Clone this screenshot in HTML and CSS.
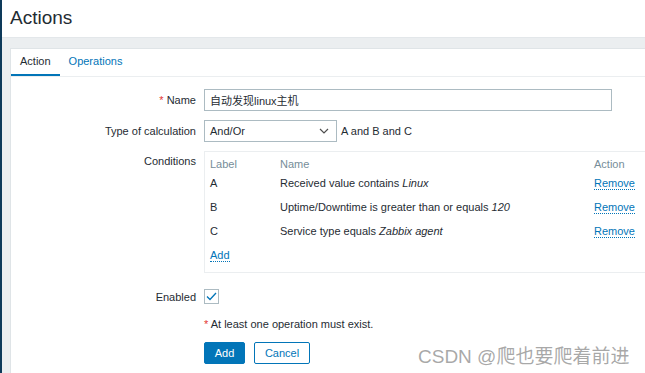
FILE: index.html
```html
<!DOCTYPE html>
<html lang="en">
<head>
    <meta charset="UTF-8">
    <title>Actions</title>
    <link rel="stylesheet" href="styles.css">
</head>
<body>
    <div class="side-edge"></div>
    <main class="wrapper">
        <header class="page-header">
            <h1>Actions</h1>
        </header>
        <div class="panel">
            <ul class="tabs">
                <li class="active"><a href="#">Action</a></li>
                <li><a href="#">Operations</a></li>
            </ul>
            <form class="action-form">
                <div class="form-row">
                    <label class="form-label"><span class="req">*</span> Name</label>
                    <input class="text-input" type="text" value="自动发现linux主机">
                </div>
                <div class="form-row">
                    <label class="form-label">Type of calculation</label>
                    <div class="select-box">
                        <span>And/Or</span>
                        <svg width="10" height="6" viewBox="0 0 10 6"><polyline points="1,1 5,5 9,1" fill="none" stroke="#4f4f4f" stroke-width="1.2"/></svg>
                    </div>
                    <span class="calc-text">A and B and C</span>
                </div>
                <div class="form-row top">
                    <label class="form-label cond-label">Conditions</label>
                    <div class="cond-box">
                        <table class="cond-table">
                            <thead>
                                <tr><th class="col-label">Label</th><th class="col-name">Name</th><th>Action</th></tr>
                            </thead>
                            <tbody>
                                <tr><td>A</td><td>Received value contains <em>Linux</em></td><td><a class="link" href="#">Remove</a></td></tr>
                                <tr><td>B</td><td>Uptime/Downtime is greater than or equals <em>120</em></td><td><a class="link" href="#">Remove</a></td></tr>
                                <tr><td>C</td><td>Service type equals <em>Zabbix agent</em></td><td><a class="link" href="#">Remove</a></td></tr>
                                <tr><td colspan="3"><a class="link" href="#">Add</a></td></tr>
                            </tbody>
                        </table>
                    </div>
                </div>
                <div class="form-row enabled-row">
                    <label class="form-label">Enabled</label>
                    <span class="checkbox">
                        <svg width="11" height="9" viewBox="0 0 11 9"><polyline points="1,4.5 4,7.5 10,1" fill="none" stroke="#0275b8" stroke-width="1.3"/></svg>
                    </span>
                </div>
                <div class="form-row error-row">
                    <span class="form-label"></span>
                    <span class="error"><span class="req">*</span> At least one operation must exist.</span>
                </div>
                <div class="form-row buttons">
                    <span class="form-label"></span>
                    <button class="btn btn-primary" type="button">Add</button>
                    <button class="btn btn-alt" type="button">Cancel</button>
                </div>
            </form>
        </div>
    </main>
    <div class="watermark">CSDN @爬也要爬着前进</div>
</body>
</html>
```
FILE: styles.css
```css
* {
    margin: 0;
    padding: 0;
    box-sizing: border-box;
}

body {
    font-family: "Liberation Sans", Arial, "Noto Sans CJK SC", sans-serif;
    font-size: 11px;
    color: #1f2c33;
    display: flex;
    min-height: 100vh;
    overflow: hidden;
    background: #ebeef0;
}

.side-edge {
    width: 2px;
    background: #0e3a5a;
    flex-shrink: 0;
}

.wrapper {
    flex: 1;
    background: #ebeef0;
}

.page-header {
    background: #fff;
    height: 38px;
    padding: 6px 8px 0;
    border-bottom: 1px solid #e3e7ea;
}

.page-header h1 {
    font-size: 19px;
    font-weight: normal;
    line-height: 24px;
}

.panel {
    background: #fff;
    border: 1px solid #dfe4e7;
    margin: 10px -10px 0 8px;
    height: 340px;
}

.tabs {
    list-style: none;
    display: flex;
    border-bottom: 1px solid #ebeef0;
}

.tabs li a {
    display: block;
    height: 27px;
    line-height: 25px;
    padding: 0 9px;
    color: #0275b8;
    text-decoration: none;
    border-bottom: 2px solid transparent;
}

.tabs li.active a {
    color: #1f2c33;
    border-bottom-color: #0275b8;
}

.action-form {
    padding-top: 12px;
}

.form-row {
    display: flex;
    align-items: center;
    margin-bottom: 9px;
}

.form-row.top {
    align-items: flex-start;
}

.form-label {
    width: 185px;
    margin-right: 8px;
    text-align: right;
    line-height: 14px;
    flex-shrink: 0;
}

.cond-label {
    padding-top: 3px;
}

.req {
    color: #e33734;
}

.text-input {
    width: 408px;
    height: 22px;
    border: 1px solid #acbbc2;
    padding: 0 5px;
    font-family: "Liberation Sans", Arial, "Noto Sans CJK SC", sans-serif;
    font-size: 11px;
    color: #1f2c33;
    outline: none;
}

.select-box {
    width: 133px;
    height: 22px;
    border: 1px solid #acbbc2;
    display: flex;
    align-items: center;
    justify-content: space-between;
    padding: 0 7px 0 5px;
}

.calc-text {
    margin-left: 4px;
}

.cond-box {
    width: 460px;
    border: 1px solid #ebeef0;
    padding: 4px 5px 5px;
}

.cond-table {
    border-collapse: collapse;
    width: 100%;
}

.cond-table th {
    font-weight: normal;
    color: #768d99;
    text-align: left;
    height: 15px;
    line-height: 14px;
}

.cond-table td {
    height: 24px;
    line-height: 14px;
}

.cond-table em {
    font-style: italic;
}

.col-label {
    width: 70px;
}

.col-name {
    width: 314px;
}

.link {
    color: #0275b8;
    text-decoration: none;
    border-bottom: 1px dotted #0275b8;
}

.enabled-row {
    margin-top: 16px;
    margin-bottom: 13px;
}

.checkbox {
    width: 15px;
    height: 15px;
    border: 1px solid #acbbc2;
    display: flex;
    align-items: center;
    justify-content: center;
}

.error-row {
    margin-bottom: 11px;
    line-height: 14px;
}

.btn {
    height: 22px;
    font-family: "Liberation Sans", Arial, sans-serif;
    font-size: 11px;
    border: 1px solid #0275b8;
    border-radius: 2px;
    cursor: pointer;
}

.btn-primary {
    width: 41px;
    background: #0275b8;
    color: #fff;
    margin-right: 9px;
}

.btn-alt {
    width: 56px;
    background: #fff;
    color: #0275b8;
}

.watermark {
    position: absolute;
    left: 418px;
    top: 341px;
    font-size: 19px;
    color: rgba(140, 140, 140, 0.75);
    font-family: "Liberation Sans", Arial, "Noto Sans CJK SC", sans-serif;
    white-space: nowrap;
}
```
